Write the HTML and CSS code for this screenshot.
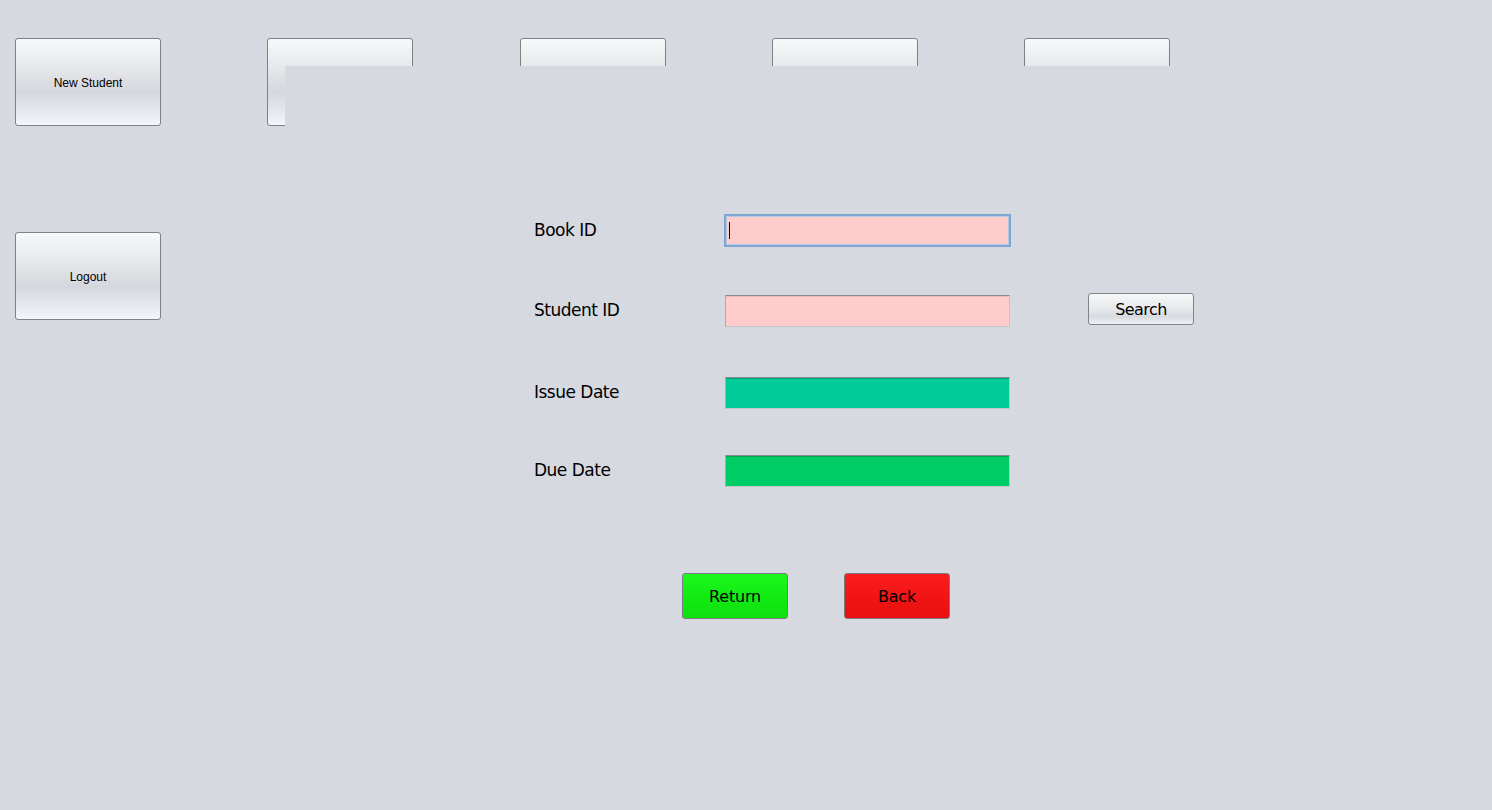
FILE: index.html
```html
<!DOCTYPE html>
<html>
<head>
<meta charset="utf-8">
<link rel="stylesheet" href="styles.css">
<title>Return Book</title>
</head>
<body>
<div class="app">
  <div class="menu-row">
    <button class="menu-btn">New Student</button>
    <button class="menu-btn"></button>
    <button class="menu-btn"></button>
    <button class="menu-btn"></button>
    <button class="menu-btn"></button>
  </div>
  <div class="side">
    <button class="menu-btn">Logout</button>
  </div>

  <div class="panel">
    <div class="form">
      <div class="row row-book">
        <label class="lbl">Book ID</label>
        <div class="field field-pink field-focus"><span class="caret"></span></div>
      </div>
      <div class="row row-student">
        <label class="lbl">Student ID</label>
        <div class="field field-pink"></div>
        <button class="search-btn">Search</button>
      </div>
      <div class="row row-issue">
        <label class="lbl">Issue Date</label>
        <div class="field field-teal"></div>
      </div>
      <div class="row row-due">
        <label class="lbl">Due Date</label>
        <div class="field field-green"></div>
      </div>
      <div class="actions">
        <button class="act-btn act-return">Return</button>
        <button class="act-btn act-back">Back</button>
      </div>
    </div>
  </div>
</div>
</body>
</html>
```
FILE: styles.css
```css
html, body {
  margin: 0;
  padding: 0;
  width: 1492px;
  height: 810px;
  overflow: hidden;
  background: #d6d9e0;
}
.app {
  position: relative;
  width: 1492px;
  height: 810px;
}
.menu-row {
  display: flex;
  padding: 38px 0 0 15px;
  gap: 106px;
}
.menu-row .menu-btn:nth-child(3) { margin-left: 1px; }
.side {
  padding: 106px 0 0 15px;
}
.menu-btn {
  box-sizing: border-box;
  width: 146px;
  height: 88px;
  padding: 2px 0 0 0;
  border: 1px solid #7f8185;
  border-radius: 3px;
  background: linear-gradient(to bottom, #f7f8f9 0%, #e5e7ea 35%, #d4d7dd 62%, #e6e8ee 85%, #f4f6fc 100%);
  font-family: "Liberation Sans", Arial, sans-serif;
  font-size: 12px;
  color: #000;
  cursor: default;
}
.panel {
  position: absolute;
  left: 285px;
  top: 66px;
  right: 0;
  bottom: 0;
  background: #d6d9e0;
}
.form {
  padding: 148px 0 0 249px;
  font-family: "DejaVu Sans", Tahoma, sans-serif;
}
.row {
  display: flex;
  align-items: center;
  height: 32px;
}
.row-student { margin-top: 49px; }
.row-issue { margin-top: 50px; }
.row-due { margin-top: 46px; }
.lbl {
  width: 191px;
  font-size: 17px;
  letter-spacing: -0.5px;
  color: #000;
  position: relative;
  top: -1px;
}
.row-book .lbl { top: 0; }
.field {
  box-sizing: border-box;
  width: 285px;
  height: 32px;
  border: 1px solid #c3c5c9;
  border-left-color: #a9abaf;
  border-top-color: #8a8c90;
}
.field-pink { background: #ffcccc; box-shadow: inset 0 1px 0 #eab9b9; }
.field-teal { background: #00cc99; box-shadow: inset 0 1px 0 #00a57c; }
.field-green { background: #00cc66; box-shadow: inset 0 1px 0 #00a553; }
.field-focus {
  width: 287px;
  height: 33px;
  margin-left: -1px;
  border: 2px solid #7fa6d2;
  box-shadow: inset 0 0 0 1px #b4c9e2;
  display: flex;
  align-items: center;
  padding-left: 3px;
}
.caret {
  display: block;
  width: 1px;
  height: 17px;
  background: #000;
}
.search-btn {
  box-sizing: border-box;
  margin-left: 78px;
  width: 106px;
  height: 32px;
  padding: 0;
  border: 1px solid #818388;
  border-radius: 3px;
  background: linear-gradient(to bottom, #f6f7f8 0%, #e8eaed 45%, #d7dadf 75%, #eef0f6 100%);
  font-family: "DejaVu Sans", Tahoma, sans-serif;
  font-size: 16px;
  letter-spacing: -0.6px;
  color: #000;
  position: relative;
  top: -2px;
}
.actions {
  display: flex;
  gap: 56px;
  padding: 86px 0 0 148px;
}
.act-btn {
  box-sizing: border-box;
  width: 106px;
  height: 46px;
  padding: 0;
  border: 1px solid #7a7c80;
  border-radius: 3px;
  font-family: "DejaVu Sans", Tahoma, sans-serif;
  font-size: 16px;
  letter-spacing: -0.2px;
  color: #000;
}
.act-return { background: linear-gradient(to bottom, #1bf81b 0%, #12ea12 55%, #0fe00f 100%); }
.act-back { background: linear-gradient(to bottom, #fb1e1e 0%, #f01414 55%, #e81111 100%); }
```
